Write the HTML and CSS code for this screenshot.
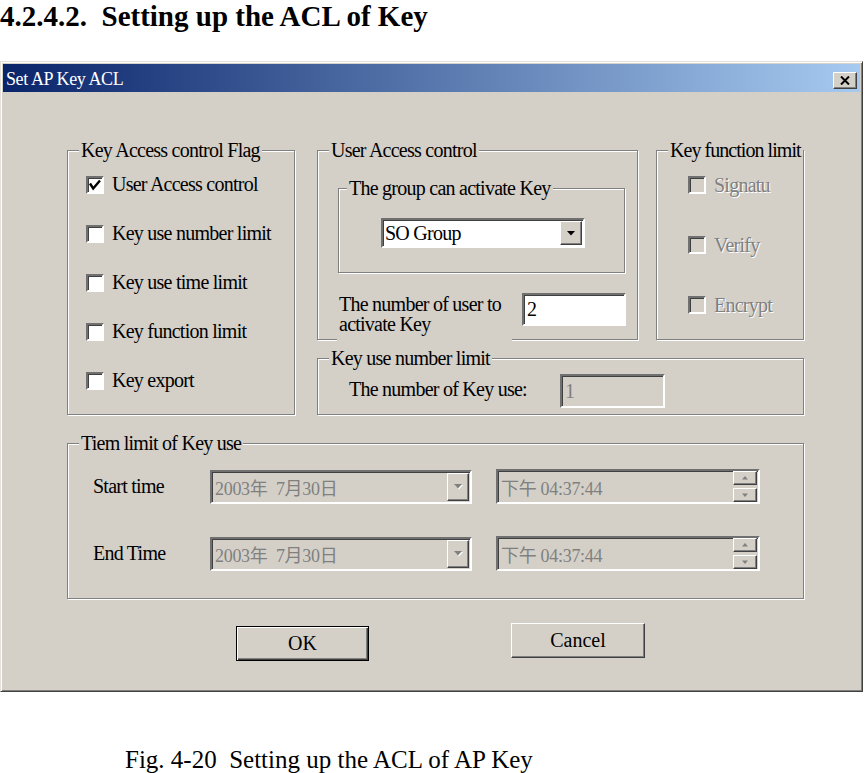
FILE: index.html
```html
<!DOCTYPE html>
<html lang="en">
<head>
<meta charset="utf-8">
<title>Set AP Key ACL</title>
<link rel="stylesheet" href="styles.css">
</head>
<body>
<h1 class="doc-heading">4.2.4.2.&nbsp; Setting up the ACL of Key</h1>
<div class="window">
  <div class="titlebar">
    <span class="title">Set AP Key ACL</span>
    <span class="close-btn"><svg width="10" height="9" viewBox="0 0 10 9"><path d="M1 0.5 L9 8.5 M9 0.5 L1 8.5" stroke="#000" stroke-width="2" fill="none"/></svg></span>
  </div>
  <div class="dialog-body">
    <div class="top-area">
      <div class="group group-flags">
        <div class="legend">Key Access control Flag</div>
        <div class="flag-list">
          <div class="check-row"><span class="cb"><svg class="check" width="14" height="14" viewBox="0 0 14 14"><path d="M2 5.5 L5.2 10.5 L12 2.5" stroke="#000" stroke-width="2.4" fill="none"/></svg></span><span>User Access control</span></div>
          <div class="check-row"><span class="cb"></span><span>Key use number limit</span></div>
          <div class="check-row"><span class="cb"></span><span>Key use time limit</span></div>
          <div class="check-row"><span class="cb"></span><span>Key function limit</span></div>
          <div class="check-row"><span class="cb"></span><span>Key export</span></div>
        </div>
      </div>
      <div class="right-col">
        <div class="row-top">
          <div class="group group-user">
            <div class="legend legend-user">User Access control</div>
            <div class="group subgroup">
              <div class="legend legend-sub">The group can activate Key</div>
              <div class="combo combo-group">
                <span class="combo-text">SO Group</span>
                <span class="drop-btn"><svg width="8" height="5" viewBox="0 0 8 5"><polygon points="0,0 8,0 4,4.5" fill="#000"/></svg></span>
              </div>
            </div>
            <div class="user-count">
              <div class="count-label">The number of user to<br>activate Key</div>
              <div class="textbox">2</div>
            </div>
          </div>
          <div class="group group-func">
            <div class="legend legend-func">Key function limit</div>
            <div class="func-list">
              <div class="func-row"><span class="cb cb-disabled"></span><span class="disabled-text">Signatu</span></div>
              <div class="func-row"><span class="cb cb-disabled"></span><span class="disabled-text">Verify</span></div>
              <div class="func-row"><span class="cb cb-disabled"></span><span class="disabled-text">Encrypt</span></div>
            </div>
          </div>
        </div>
        <div class="group group-uses">
          <div class="legend">Key use number limit</div>
          <div class="uses-row">
            <span class="uses-label">The number of Key use:</span>
            <div class="textbox textbox-disabled">1</div>
          </div>
        </div>
      </div>
    </div>
    <div class="group group-time">
      <div class="legend">Tiem limit of Key use</div>
      <div class="time-rows">
        <div class="time-row">
          <span class="time-label">Start time</span>
          <div class="combo combo-date">
            <span class="value-text">2003年&nbsp;&nbsp;7月30日</span>
            <span class="drop-btn"><svg width="9" height="6" viewBox="0 0 9 6"><polygon points="1,1 9,1 5,5.5" fill="#fff"/><polygon points="0,0 8,0 4,4.5" fill="#808080"/></svg></span>
          </div>
          <div class="picker">
            <span class="value-text">下午 04:37:44</span>
            <div class="spin">
              <span class="spin-btn"><svg width="6" height="4" viewBox="0 0 6 4"><polygon points="0,3.5 6,3.5 3,0" fill="#808080"/></svg></span>
              <span class="spin-btn"><svg width="6" height="4" viewBox="0 0 6 4"><polygon points="0,0.5 6,0.5 3,4" fill="#808080"/></svg></span>
            </div>
          </div>
        </div>
        <div class="time-row">
          <span class="time-label">End Time</span>
          <div class="combo combo-date">
            <span class="value-text">2003年&nbsp;&nbsp;7月30日</span>
            <span class="drop-btn"><svg width="9" height="6" viewBox="0 0 9 6"><polygon points="1,1 9,1 5,5.5" fill="#fff"/><polygon points="0,0 8,0 4,4.5" fill="#808080"/></svg></span>
          </div>
          <div class="picker">
            <span class="value-text">下午 04:37:44</span>
            <div class="spin">
              <span class="spin-btn"><svg width="6" height="4" viewBox="0 0 6 4"><polygon points="0,3.5 6,3.5 3,0" fill="#808080"/></svg></span>
              <span class="spin-btn"><svg width="6" height="4" viewBox="0 0 6 4"><polygon points="0,0.5 6,0.5 3,4" fill="#808080"/></svg></span>
            </div>
          </div>
        </div>
      </div>
    </div>
    <div class="buttons">
      <div class="btn btn-default">OK</div>
      <div class="btn btn-cancel">Cancel</div>
    </div>
  </div>
</div>
<p class="caption">Fig. 4-20&nbsp; Setting up the ACL of AP Key</p>
</body>
</html>
```

FILE: styles.css
```css
* { box-sizing: border-box; }
html { overflow: hidden; }
body {
  margin: 0;
  background: #fff;
  color: #000;
  font-family: "Liberation Serif", "Noto Sans CJK TC", serif;
}
.doc-heading {
  margin: 0;
  font-size: 29px;
  line-height: 32px;
  font-weight: bold;
  white-space: nowrap;
}
.window {
  margin-top: 29px;
  width: 863px;
  height: 631px;
  padding: 2px;
  background: #d4d0c8;
  border: 1px solid;
  border-color: #e4e1dc #404040 #404040 #e4e1dc;
  box-shadow: inset 1px 1px #fff, inset -1px -1px #808080;
}
.titlebar {
  display: flex;
  justify-content: space-between;
  align-items: flex-start;
  height: 28px;
  padding: 0 3px;
  background: linear-gradient(to right, #0a246a, #a6caf0);
}
.title {
  color: #fff;
  font-size: 18px;
  line-height: 27px;
  padding-top: 2px;
  letter-spacing: -0.4px;
}
.close-btn {
  display: flex;
  align-items: center;
  justify-content: center;
  width: 24px;
  height: 17px;
  margin-top: 8px;
  background: #d4d0c8;
  border: 1px solid;
  border-color: #fff #404040 #404040 #fff;
  box-shadow: inset -1px -1px #808080;
}
.close-btn svg { display: block; }
.dialog-body {
  padding: 58px 0 0 64px;
  font-size: 20px;
  letter-spacing: -0.75px;
}
.top-area { display: flex; gap: 22px; }
.right-col { width: 487px; display: flex; flex-direction: column; gap: 18px; }
.row-top { display: flex; gap: 18px; }
.group {
  border: 1px solid #808080;
  box-shadow: 1px 1px 0 #fff, inset 1px 1px 0 #fff;
}
.legend {
  width: fit-content;
  margin: -11px 0 0 11px;
  padding: 0 2px;
  line-height: 20px;
  background: #d4d0c8;
  white-space: nowrap;
}
.legend-sub { margin-left: 8px; }
.legend-user { margin-left: -9px; }
.legend-func { letter-spacing: -0.95px; }

.group-flags { width: 228px; height: 265px; flex: none; }
.flag-list { display: flex; flex-direction: column; padding-left: 18px; }
.check-row { display: flex; align-items: center; gap: 8px; height: 49px; white-space: nowrap; }
.cb {
  width: 18px;
  height: 18px;
  flex: none;
  background: #fff;
  border: 2px solid;
  border-color: #707070 #fff #fff #707070;
  box-shadow: inset 1px 1px #404040;
}
.check { display: block; }
.cb-disabled { background: #d4d0c8; }
.disabled-text { color: #808080; text-shadow: 1px 1px 0 #fff; }

.group-user { width: 321px; height: 190px; padding: 0 12px 0 20px; flex: none; }
.subgroup { height: 85px; margin-top: 28px; }
.combo {
  display: flex;
  border: 2px solid;
  border-color: #707070 #fff #fff #707070;
  box-shadow: inset 1px 1px #404040;
}
.combo-group { width: 204px; height: 30px; margin: 20px 0 0 42px; background: #fff; }
.combo-text { flex: 1; padding-left: 2px; line-height: 26px; white-space: nowrap; }
.drop-btn {
  display: flex;
  align-items: center;
  justify-content: center;
  width: 22px;
  flex: none;
  margin: 1px 1px 1px 0;
  background: #d4d0c8;
  border: 1px solid;
  border-color: #fff #404040 #404040 #fff;
  box-shadow: inset -1px -1px #808080;
}
.drop-btn svg, .spin-btn svg { display: block; }
.user-count { display: flex; align-items: flex-start; gap: 10px; margin: 20px 0 0 -1px; }
.count-label {
  flex: none;
  width: 175px;
  height: 50px;
  padding: 1px 0 0 2px;
  line-height: 20px;
  background: #d4d0c8;
  white-space: nowrap;
}
.textbox {
  flex: none;
  width: 104px;
  height: 33px;
  padding-left: 3px;
  line-height: 29px;
  background: #fff;
  border: 2px solid;
  border-color: #707070 #fff #fff #707070;
  box-shadow: inset 1px 1px #404040;
}

.group-func { width: 148px; height: 190px; flex: none; }
.func-list { display: flex; flex-direction: column; gap: 40px; padding: 15px 0 0 31px; }
.func-row { display: flex; align-items: center; gap: 8px; height: 20px; white-space: nowrap; }

.group-uses { height: 57px; }
.uses-row { display: flex; align-items: center; margin-top: 6px; padding-left: 31px; }
.uses-label { width: 211px; flex: none; white-space: nowrap; padding-bottom: 3px; }
.textbox-disabled { width: 105px; height: 34px; background: #d4d0c8; color: #808080; line-height: 30px; }

.group-time { width: 737px; height: 156px; margin-top: 28px; }
.time-rows { display: flex; flex-direction: column; gap: 32px; padding: 16px 0 0 25px; }
.time-row { display: flex; align-items: center; height: 35px; }
.time-label { width: 117px; flex: none; white-space: nowrap; }
.combo-date { width: 262px; height: 34px; background: #d4d0c8; align-items: center; }
.combo-date .drop-btn { align-self: stretch; }
.value-text {
  flex: 1;
  padding-left: 3px;
  font-size: 18px;
  letter-spacing: -0.3px;
  color: #808080;
  white-space: nowrap;
}
.picker {
  display: flex;
  align-items: center;
  width: 264px;
  height: 35px;
  margin-left: 24px;
  background: #d4d0c8;
  border: 2px solid;
  border-color: #707070 #fff #fff #707070;
  box-shadow: inset 1px 1px #404040;
}
.spin { display: flex; flex-direction: column; gap: 3px; margin-right: 1px; }
.spin-btn {
  display: flex;
  align-items: center;
  justify-content: center;
  width: 24px;
  height: 14px;
  background: #d4d0c8;
  border: 1px solid;
  border-color: #fff #404040 #404040 #fff;
  box-shadow: inset -1px -1px #808080;
}

.buttons { display: flex; align-items: flex-start; gap: 142px; margin-top: 24px; padding-left: 169px; }
.btn {
  display: flex;
  align-items: center;
  justify-content: center;
  width: 133px;
  height: 35px;
  letter-spacing: 0;
  background: #d4d0c8;
  border: 1px solid;
  border-color: #fff #404040 #404040 #fff;
  box-shadow: inset -1px -1px #808080;
}
.btn-default {
  margin-top: 3px;
  border-color: #000;
  box-shadow: inset 1px 1px #fff, inset -1px -1px #404040, inset -2px -2px #808080;
}
.btn-cancel { width: 134px; }

.caption {
  margin: 55px 0 0;
  padding-left: 125px;
  font-size: 25px;
  line-height: 26px;
  white-space: nowrap;
}
```
